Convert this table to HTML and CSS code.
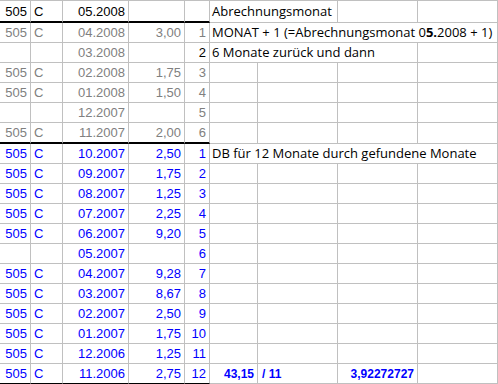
FILE: index.html
```html
<!DOCTYPE html>
<html>
<head>
<meta charset="utf-8">
<link rel="stylesheet" href="styles.css">
</head>
<body>
<div class="sheet">
  <!-- row 0 -->
  <div class="c r k th">505</div><div class="c k th">C</div><div class="c r k th">05.2008</div><div class="c th"></div><div class="c th"></div>
  <div class="c t s2">Abrechnungsmonat</div><div class="c"></div><div class="c"></div>
  <!-- row 1 -->
  <div class="c r g">505</div><div class="c g">C</div><div class="c r g">04.2008</div><div class="c r g">3,00</div><div class="c r g">1</div>
  <div class="c t s4">MONAT + 1 (=Abrechnungsmonat 0<b>5.</b>2008 + 1)</div>
  <!-- row 2 -->
  <div class="c"></div><div class="c"></div><div class="c r g">03.2008</div><div class="c"></div><div class="c r k">2</div>
  <div class="c t s3">6 Monate zurück und dann</div><div class="c"></div>
  <!-- row 3 -->
  <div class="c r g">505</div><div class="c g">C</div><div class="c r g">02.2008</div><div class="c r g">1,75</div><div class="c r g">3</div>
  <div class="c"></div><div class="c"></div><div class="c"></div><div class="c"></div>
  <!-- row 4 -->
  <div class="c r g">505</div><div class="c g">C</div><div class="c r g">01.2008</div><div class="c r g">1,50</div><div class="c r g">4</div>
  <div class="c"></div><div class="c"></div><div class="c"></div><div class="c"></div>
  <!-- row 5 -->
  <div class="c"></div><div class="c"></div><div class="c r g">12.2007</div><div class="c"></div><div class="c r g">5</div>
  <div class="c"></div><div class="c"></div><div class="c"></div><div class="c"></div>
  <!-- row 6 -->
  <div class="c r g th">505</div><div class="c g th">C</div><div class="c r g th">11.2007</div><div class="c r g th">2,00</div><div class="c r g th">6</div>
  <div class="c"></div><div class="c"></div><div class="c"></div><div class="c"></div>
  <!-- row 7 -->
  <div class="c r u">505</div><div class="c u">C</div><div class="c r u">10.2007</div><div class="c r u">2,50</div><div class="c r u">1</div>
  <div class="c t s4">DB für 12 Monate durch gefundene Monate</div>
  <!-- row 8 -->
  <div class="c r u">505</div><div class="c u">C</div><div class="c r u">09.2007</div><div class="c r u">1,75</div><div class="c r u">2</div>
  <div class="c"></div><div class="c"></div><div class="c"></div><div class="c"></div>
  <!-- row 9 -->
  <div class="c r u">505</div><div class="c u">C</div><div class="c r u">08.2007</div><div class="c r u">1,25</div><div class="c r u">3</div>
  <div class="c"></div><div class="c"></div><div class="c"></div><div class="c"></div>
  <!-- row 10 -->
  <div class="c r u">505</div><div class="c u">C</div><div class="c r u">07.2007</div><div class="c r u">2,25</div><div class="c r u">4</div>
  <div class="c"></div><div class="c"></div><div class="c"></div><div class="c"></div>
  <!-- row 11 -->
  <div class="c r u">505</div><div class="c u">C</div><div class="c r u">06.2007</div><div class="c r u">9,20</div><div class="c r u">5</div>
  <div class="c"></div><div class="c"></div><div class="c"></div><div class="c"></div>
  <!-- row 12 -->
  <div class="c"></div><div class="c"></div><div class="c r u">05.2007</div><div class="c"></div><div class="c r u">6</div>
  <div class="c"></div><div class="c"></div><div class="c"></div><div class="c"></div>
  <!-- row 13 -->
  <div class="c r u">505</div><div class="c u">C</div><div class="c r u">04.2007</div><div class="c r u">9,28</div><div class="c r u">7</div>
  <div class="c"></div><div class="c"></div><div class="c"></div><div class="c"></div>
  <!-- row 14 -->
  <div class="c r u">505</div><div class="c u">C</div><div class="c r u">03.2007</div><div class="c r u">8,67</div><div class="c r u">8</div>
  <div class="c"></div><div class="c"></div><div class="c"></div><div class="c"></div>
  <!-- row 15 -->
  <div class="c r u">505</div><div class="c u">C</div><div class="c r u">02.2007</div><div class="c r u">2,50</div><div class="c r u">9</div>
  <div class="c"></div><div class="c"></div><div class="c"></div><div class="c"></div>
  <!-- row 16 -->
  <div class="c r u">505</div><div class="c u">C</div><div class="c r u">01.2007</div><div class="c r u">1,75</div><div class="c r u">10</div>
  <div class="c"></div><div class="c"></div><div class="c"></div><div class="c"></div>
  <!-- row 17 -->
  <div class="c r u">505</div><div class="c u">C</div><div class="c r u">12.2006</div><div class="c r u">1,25</div><div class="c r u">11</div>
  <div class="c"></div><div class="c"></div><div class="c"></div><div class="c"></div>
  <!-- row 18 -->
  <div class="c r u bl">505</div><div class="c u bl">C</div><div class="c r u bl">11.2006</div><div class="c r u bl">2,75</div><div class="c r u bl">12</div>
  <div class="c r u bd">43,15</div><div class="c u bd sl">/ 11</div><div class="c r u bd">3,92272727</div><div class="c"></div>
</div>
</body>
</html>
```
FILE: styles.css
```css
html, body {
  margin: 0;
  padding: 0;
  background: #ffffff;
}
.sheet {
  display: grid;
  grid-template-columns: 31px 32px 66px 56px 25px 48px 80px 80px 80px;
  grid-template-rows: 22px repeat(5, 20px) 21px repeat(12, 20px);
  width: 498px;
  border-top: 1px solid #c0c0c0;
  font-family: "Liberation Sans", Arial, sans-serif;
  font-size: 13px;
  color: #000;
}
.c {
  box-sizing: border-box;
  border-right: 1px solid #c0c0c0;
  border-bottom: 1px solid #c0c0c0;
  padding: 0 3px 0 3px;
  display: flex;
  align-items: center;
  white-space: nowrap;
  overflow: visible;
  line-height: 1;
}
.r { justify-content: flex-end; }
.k { color: #000; }
.g { color: #808080; }
.u { color: #0000ff; }
.th { border-bottom: 2px solid #000; }
.bl { border-bottom: 1px solid #000; }
.t {
  font-family: "Open Sans", "Noto Sans", sans-serif;
  font-size: 13px;
  padding-left: 2px;
  color: #000;
}
.t b { font-weight: 700; }
.s2 { grid-column: span 2; }
.s3 { grid-column: span 3; }
.s4 { grid-column: span 4; }
.bd {
  font-weight: 700;
  font-size: 12px;
}
.sl { padding-left: 4px; }
```
